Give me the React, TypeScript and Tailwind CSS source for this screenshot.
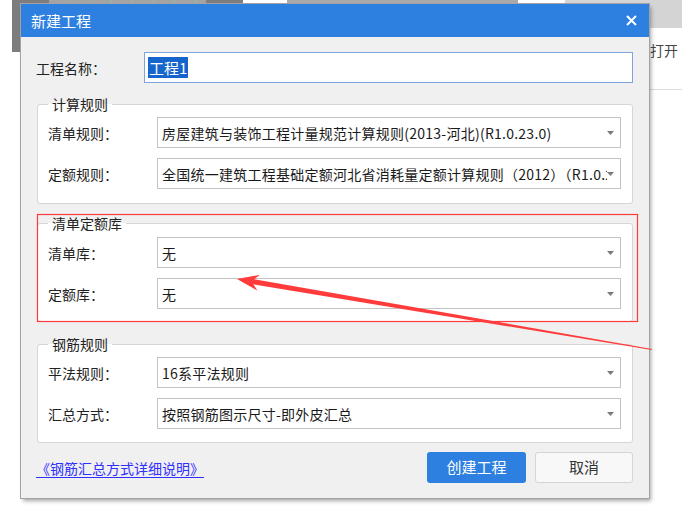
import React from 'react';

const Caret = () => (
  <svg width="7" height="4" viewBox="0 0 7 4" className="shrink-0">
    <path d="M0 0h7L3.5 4z" fill="#7a7a7a" />
  </svg>
);

const Select: React.FC<{ value: string }> = ({ value }) => (
  <div className="flex h-[31px] min-w-0 flex-1 items-center border border-[#c3c3c3] bg-white pl-[4px] pr-[6px]">
    <span className="min-w-0 flex-1 overflow-hidden whitespace-nowrap text-[14px] leading-[22px] tracking-[0.25px] text-[#1a1a1a]">
      {value}
    </span>
    <Caret />
  </div>
);

const Row: React.FC<{ label: string; value: string; className?: string }> = ({ label, value, className = '' }) => (
  <div className={`flex items-center ${className}`}>
    <span className="w-[109px] shrink-0 text-[14px] leading-[20px] text-[#222]">{label}</span>
    <Select value={value} />
  </div>
);

const Group: React.FC<{ title: string; className: string; children: React.ReactNode }> = ({ title, className, children }) => (
  <div className={`relative rounded-[3px] border border-[#d6d6d6] bg-white pl-[10px] pr-[11px] ${className}`}>
    <span className="absolute left-[10px] top-[-11px] bg-[linear-gradient(#f0f0f0_50%,#fff_50%)] px-[4px] text-[14px] leading-[20px] text-[#222]">
      {title}
    </span>
    {children}
  </div>
);

export default function App() {
  return (
    <div className="relative h-[506px] w-[682px] overflow-hidden bg-white font-['Noto_Sans_CJK_SC','Microsoft_YaHei',sans-serif]">
      {/* app window behind the dialog */}
      <div className="flex items-start">
        <div className="w-[12px] shrink-0" />
        <div className="h-[52px] w-[37px] shrink-0 bg-[#7d7d7d]" />
        <div className="h-[20px] w-[157px] shrink-0 bg-[repeating-linear-gradient(90deg,#a4a4a4_0_20px,#8cc08c_20px_21px)]" />
        <div className="h-[20px] w-[37px] shrink-0 bg-[#7d7d7d]" />
        <div className="w-[44px] shrink-0" />
        <div className="h-[20px] w-[231px] shrink-0 bg-[#a9a9a9]" />
        <div className="w-[47px] shrink-0" />
        <div className="flex min-w-0 flex-1 flex-col overflow-hidden">
          <div className="h-[28px] bg-[#d4d4d4]" />
          <div className="mt-[14px] whitespace-nowrap pl-[85px] text-[14px] leading-[16px] text-[#444]">打开</div>
          <div className="mt-[31px] h-px bg-[#dedede]" />
        </div>
      </div>

      {/* dialog */}
      <div className="absolute left-[21px] top-[4px] flex h-[494px] w-[628px] flex-col bg-[#f0f0f0] shadow-[0_0_0_1px_#a3a3a3,2px_3px_4px_rgba(0,0,0,0.35)]">
        <div className="flex h-[33px] items-center justify-between bg-[#2d7fe0] pl-[10px] pr-[12px]">
          <span className="text-[15px] leading-[20px] text-white">新建工程</span>
          <svg width="11" height="11" viewBox="0 0 11 11">
            <path d="M1 1l9 9M10 1l-9 9" stroke="#fff" strokeWidth="2" />
          </svg>
        </div>

        <div className="flex flex-1 flex-col px-[16px] pt-[15px]">
          <div className="flex items-center">
            <span className="ml-[-1px] w-[108px] shrink-0 text-[14px] leading-[20px] text-[#222]">工程名称：</span>
            <div className="flex h-[31px] min-w-0 flex-1 items-center border border-[#7fa3db] bg-white pl-[3px]">
              <span className="bg-[#1565cc] px-[1px] text-[15px] leading-[21px] text-white">工程1</span>
            </div>
          </div>

          <Group title="计算规则" className="mt-[21px] pb-[14px] pt-[12px]">
            <Row label="清单规则：" value="房屋建筑与装饰工程计量规范计算规则(2013-河北)(R1.0.23.0)" />
            <Row
              className="mt-[10px]"
              label="定额规则："
              value="全国统一建筑工程基础定额河北省消耗量定额计算规则（2012）（R1.0.23.0）"
            />
          </Group>

          <Group title="清单定额库" className="mt-[19px] pb-[12px] pt-[13px]">
            <Row label="清单库：" value="无" />
            <Row className="mt-[10px]" label="定额库：" value="无" />
          </Group>

          <Group title="钢筋规则" className="mt-[22px] pb-[13px] pt-[12px]">
            <Row label="平法规则：" value="16系平法规则" />
            <Row className="mt-[10px]" label="汇总方式：" value="按照钢筋图示尺寸-即外皮汇总" />
          </Group>

          <div className="mt-[9px] flex items-center justify-between">
            <a href="#" className="ml-[-1px] text-[14px] leading-[20px] text-[#2f2fff] underline underline-offset-[3px]">
              《钢筋汇总方式详细说明》
            </a>
            <div className="flex gap-[9px]">
              <button className="h-[31px] w-[99px] rounded-[3px] bg-[#2d7fe0] text-[15px] text-white">创建工程</button>
              <button className="h-[31px] w-[98px] rounded-[3px] border border-[#d4d4d4] bg-[#f8f8f8] text-[15px] text-[#333]">取消</button>
            </div>
          </div>
        </div>
      </div>

      {/* red annotation */}
      <svg className="pointer-events-none absolute left-0 top-0" width="682" height="506">
        <rect x="37.5" y="214.5" width="600" height="107" fill="none" stroke="#ff3b3b" strokeWidth="1.2" />
        <polygon
          points="237,279 260,274.8 254.2,279.3 652,349 651.8,350.1 253.4,284.3 257.4,290.6"
          fill="#ff3b3b"
        />
      </svg>
    </div>
  );
}
